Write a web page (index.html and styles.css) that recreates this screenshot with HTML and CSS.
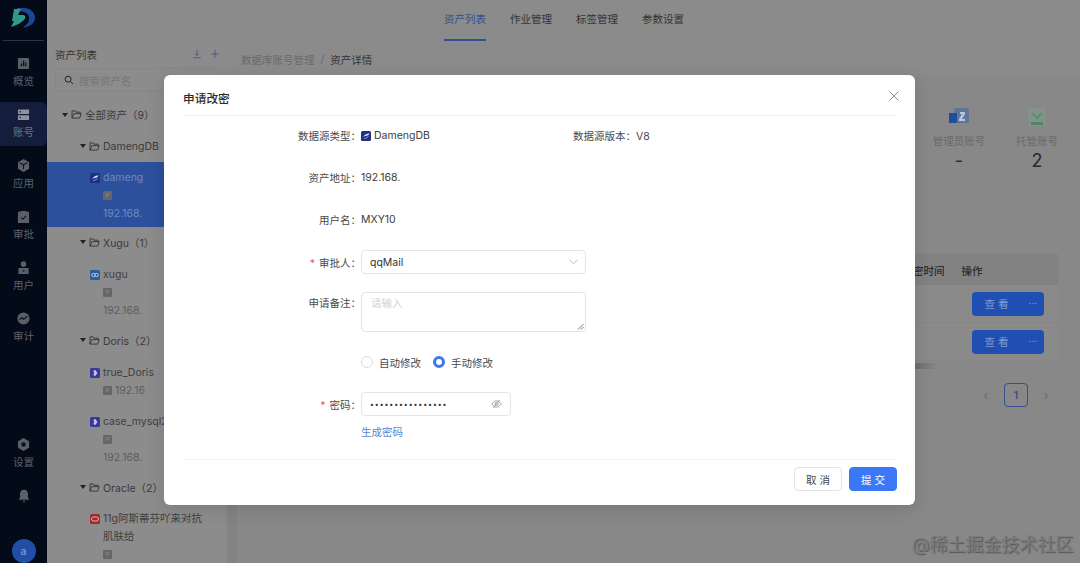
FILE: index.html
```html
<!DOCTYPE html>
<html lang="zh-CN">
<head>
<meta charset="utf-8">
<title>申请改密</title>
<link rel="stylesheet" href="styles.css">
</head>
<body>
<svg class="defs" aria-hidden="true">
  <symbol id="db-dameng" viewBox="0 0 10 10"><rect width="10" height="10" rx="1.500" fill="#1d2f86"/><path d="M2 6.500C3 3.500 5.500 2.500 8.500 2.200 8 3.800 7 4.600 5.500 4.800 4 5 3 5.600 2 6.500z" fill="#dfe6f5"/><path d="M8 4.500C7 7 5 8 2 7.800c2-.4 4-1.600 6-3.300z" fill="#9fb2dd"/></symbol>
  <symbol id="db-xugu" viewBox="0 0 10 10"><rect width="10" height="10" rx="1.500" fill="#2c5c9a"/><circle cx="3.400" cy="5" r="1.700" fill="none" stroke="#b9c9de"/><circle cx="6.600" cy="5" r="1.700" fill="none" stroke="#b9c9de"/></symbol>
  <symbol id="db-doris" viewBox="0 0 10 10"><rect width="10" height="10" rx="1.500" fill="#3a389a"/><path d="M5 1.800L7.500 5 5 8.200 3.300 6.800 4.400 5 3.300 3.200z" fill="#c5c6e4"/></symbol>
  <symbol id="db-oracle" viewBox="0 0 10 10"><rect width="10" height="10" rx="1.500" fill="#a52a2e"/><rect x="1.500" y="3" width="7" height="4" rx="2" fill="none" stroke="#e2b4b4"/></symbol>
  <symbol id="folder" viewBox="0 0 12 10"><path d="M1 9V1h3.500l1 1.400H10v1.400M1 9h8.500l1.700-5H3z" stroke="#333" fill="none"/></symbol>
</svg>

<div class="page">
  <aside class="sidebar">
    <div class="logo">
      <svg width="24" height="20" viewBox="0 0 24 20"><path d="M6 0h7c6 0 11 4 11 10 0 5-5 9-12 9.500 4-3 7-6.500 6-10.500-1-4-5-6-12-6z" fill="#1d4796"/><path d="M3 1h7L7 7h5c3 0 3 3 1 5-3 3-7 5-13 7l3-6H1z" fill="#2f9a88"/></svg>
    </div>
    <nav class="nav">
      <a class="nav-item"><svg class="nav-icon" viewBox="0 0 14 14"><rect x="1" y="1" width="12" height="12" rx="1.500" fill="#5a5f68"/><path d="M4 10V7h1.400v3zM6.400 10V4h1.400v6zM8.800 10V6h1.400v4z" fill="#0b1220"/></svg><span>概览</span></a>
      <a class="nav-item active"><svg class="nav-icon" viewBox="0 0 14 14"><path d="M1 1.500h12v5H1zM1 7.800h12v5H1z" fill="#8e929b"/><circle cx="3.500" cy="4" r=".8" fill="#0e1730"/><circle cx="3.500" cy="10.300" r=".8" fill="#0e1730"/></svg><span>账号</span></a>
      <a class="nav-item"><svg class="nav-icon" viewBox="0 0 14 14"><path d="M7 0l6 3.400v7.200L7 14l-6-3.400V3.400z" fill="#5a5f68"/><path d="M3 4l4 2.400L11 4M7 6.400V11" stroke="#0b1220" stroke-width="1.100" fill="none"/></svg><span>应用</span></a>
      <a class="nav-item"><svg class="nav-icon" viewBox="0 0 14 14"><path d="M4 2V1h6v1h3v12H1V2z" fill="#5a5f68"/><path d="M4.400 8l2 2 3.400-3.600" stroke="#0b1220" stroke-width="1.200" fill="none"/></svg><span>审批</span></a>
      <a class="nav-item"><svg class="nav-icon" viewBox="0 0 14 14"><circle cx="7" cy="3.400" r="3" fill="#5a5f68"/><path d="M1.500 7.500h11V14h-11z" fill="#5a5f68"/><path d="M6 10h2v1.400H6z" fill="#0b1220"/></svg><span>用户</span></a>
      <a class="nav-item"><svg class="nav-icon" viewBox="0 0 14 14"><circle cx="7" cy="7" r="6.500" fill="#5a5f68"/><path d="M2.600 8.400l2.600-2.400 2 1.800 4-3.200" stroke="#0b1220" stroke-width="1.200" fill="none"/></svg><span>审计</span></a>
    </nav>
    <div class="nav-bottom">
      <a class="nav-item"><svg class="nav-icon" viewBox="0 0 14 14"><path d="M7 0l6 3.500v7L7 14l-6-3.500v-7z" fill="#5a5f68"/><circle cx="7" cy="7" r="2.400" fill="#0b1220"/></svg><span>设置</span></a>
      <svg class="bell" viewBox="0 0 14 14"><path d="M7 .8c2.600 0 4 2 4 4.400v3.600l1.400 2H1.600l1.400-2V5.200c0-2.400 1.400-4.400 4-4.400z" fill="#5a5f68"/><path d="M5.500 11.800h3L7 13.600z" fill="#5a5f68"/></svg>
      <div class="avatar">a</div>
    </div>
  </aside>

  <section class="tree-panel">
    <header class="tree-head">
      <span>资产列表</span>
      <span class="tree-tools">
        <svg viewBox="0 0 12 12" class="tool"><path d="M6 1v6.500M3.800 5.500L6 7.800l2.200-2.300M1.500 10.500h9" stroke="#3c5480" fill="none"/></svg>
        <svg viewBox="0 0 12 12" class="tool"><path d="M6 1.500v9M1.500 6h9" stroke="#3c5480" fill="none"/></svg>
      </span>
    </header>
    <div class="search">
      <svg viewBox="0 0 12 12" class="search-icon"><circle cx="5" cy="5" r="3.600" stroke="#222" stroke-width="1.200" fill="none"/><path d="M7.800 7.800l3 3" stroke="#222" stroke-width="1.200"/></svg>
      <span class="search-text">搜索资产名</span>
    </div>
    <div class="tree">
      <div class="group root"><i class="caret"></i><svg class="folder"><use href="#folder"/></svg>全部资产（9）</div>

      <div class="group"><i class="caret"></i><svg class="folder"><use href="#folder"/></svg>DamengDB</div>
      <div class="asset selected">
        <div class="asset-name"><svg class="db"><use href="#db-dameng"/></svg>dameng</div>
        <div class="asset-line"><i class="ip">IP</i></div>
        <div class="asset-line">192.168.</div>
      </div>

      <div class="group"><i class="caret"></i><svg class="folder"><use href="#folder"/></svg>Xugu（1）</div>
      <div class="asset">
        <div class="asset-name"><svg class="db"><use href="#db-xugu"/></svg>xugu</div>
        <div class="asset-line"><i class="ip">IP</i></div>
        <div class="asset-line">192.168.</div>
      </div>

      <div class="group"><i class="caret"></i><svg class="folder"><use href="#folder"/></svg>Doris（2）</div>
      <div class="asset single">
        <div class="asset-name"><svg class="db"><use href="#db-doris"/></svg>true_Doris</div>
        <div class="asset-line"><i class="ip">IP</i>192.16</div>
      </div>
      <div class="asset">
        <div class="asset-name"><svg class="db"><use href="#db-doris"/></svg>case_mysql2</div>
        <div class="asset-line"><i class="ip">IP</i></div>
        <div class="asset-line">192.168.</div>
      </div>

      <div class="group"><i class="caret"></i><svg class="folder"><use href="#folder"/></svg>Oracle（2）</div>
      <div class="asset last">
        <div class="asset-name wrap"><svg class="db"><use href="#db-oracle"/></svg>11g阿斯蒂芬吖来对抗肌肤给</div>
        <div class="asset-line"><i class="ip">IP</i></div>
      </div>
    </div>
  </section>

  <main class="main">
    <div class="tabs">
      <a class="tab current">资产列表</a>
      <a class="tab">作业管理</a>
      <a class="tab">标签管理</a>
      <a class="tab">参数设置</a>
    </div>
    <div class="crumbs"><span class="crumb-root">数据库账号管理</span><span class="crumb-sep">/</span><span>资产详情</span></div>
    <div class="content">
      <div class="stats">
        <div class="stat">
          <svg class="stat-icon" viewBox="0 0 20 20"><rect x="5" y="1" width="15" height="15" rx="2" fill="#5f7699"/><rect x="0" y="6" width="8" height="10" fill="#1f4f98"/><path d="M11 5h5v2l-3 5h3v2h-6v-2l3-5h-2z" fill="#b8c6da"/></svg>
          <div class="stat-label">管理员账号</div>
          <div class="stat-value">-</div>
        </div>
        <div class="stat">
          <svg class="stat-icon" viewBox="0 0 20 20"><rect x="1" y="1" width="18" height="18" rx="2" fill="#83938a"/><path d="M4 15h12v3H4z" fill="#4a8a68"/><path d="M5.500 6l4.500 5 4.500-5" stroke="#5a9276" stroke-width="2.500" fill="none"/></svg>
          <div class="stat-label">托管账号</div>
          <div class="stat-value">2</div>
        </div>
      </div>
      <div class="table">
        <div class="table-head"><span class="th-time">密时间</span><span class="th-op">操作</span></div>
        <div class="table-row"><div class="split"><span class="split-main">查 看</span><span class="split-more">···</span></div></div>
        <div class="table-row"><div class="split"><span class="split-main">查 看</span><span class="split-more">···</span></div></div>
        <div class="scrollbar"></div>
      </div>
      <div class="pager"><span class="pager-arrow">‹</span><span class="pager-num">1</span><span class="pager-arrow">›</span></div>
    </div>
  </main>
</div>

<div class="modal">
  <header class="modal-head">
    <h2>申请改密</h2>
    <svg class="close" viewBox="0 0 10 10"><path d="M.5.500l9 9M9.500.500l-9 9" stroke="#8c8c8c" fill="none"/></svg>
  </header>
  <div class="modal-body">
    <div class="row">
      <label class="label">数据源类型：</label>
      <span class="value type"><svg class="db"><use href="#db-dameng"/></svg>DamengDB</span>
      <span class="version">数据源版本：V8</span>
    </div>
    <div class="row"><label class="label">资产地址：</label><span class="value">192.168.</span></div>
    <div class="row"><label class="label">用户名：</label><span class="value">MXY10</span></div>
    <div class="row row-select">
      <label class="label"><b class="req">*</b>审批人：</label>
      <div class="select">qqMail<svg class="chevron" viewBox="0 0 10 6"><path d="M.5.500L5 5 9.500.500" stroke="#b5b5b5" fill="none"/></svg></div>
    </div>
    <div class="row row-area">
      <label class="label">申请备注：</label>
      <div class="textarea">请输入<svg class="grip" viewBox="0 0 7 7"><path d="M6.500 1L1 6.500M6.500 4L4 6.500" stroke="#777" fill="none"/></svg></div>
    </div>
    <div class="row">
      <span class="label"></span>
      <div class="radios">
        <span class="radio-item"><i class="radio"></i>自动修改</span>
        <span class="radio-item"><i class="radio on"></i>手动修改</span>
      </div>
    </div>
    <div class="row">
      <label class="label"><b class="req">*</b>密码：</label>
      <div class="password"><span class="dots">••••••••••••••••</span><svg class="eye" viewBox="0 0 12 10"><path d="M1 5c1.500-2.400 3-3.500 5-3.500S9.500 2.600 11 5C9.500 7.400 8 8.500 6 8.500S2.500 7.400 1 5z" stroke="#999" fill="none"/><circle cx="6" cy="5" r="1.700" stroke="#999" fill="none"/><path d="M9.500.500L2.500 9.500" stroke="#999"/></svg></div>
    </div>
    <a class="gen">生成密码</a>
  </div>
  <footer class="modal-foot">
    <button class="btn">取 消</button>
    <button class="btn primary">提 交</button>
  </footer>
</div>

<div class="watermark">@稀土掘金技术社区</div>
</body>
</html>
```

FILE: styles.css
```css
* { box-sizing: border-box; }
html, body { margin: 0; padding: 0; height: 100%; overflow: hidden; }
body {
  font-family: Inter, "Noto Sans CJK SC", sans-serif;
  font-size: 10.5px;
  color: #333;
  background: #8b8b8b;
}
i { font-style: normal; }
svg { display: block; flex: none; }
.defs { position: absolute; width: 0; height: 0; }

.page { display: flex; width: 1080px; height: 563px; overflow: hidden; }

/* sidebar */
.sidebar {
  width: 47px;
  flex: none;
  background: #030b19;
  display: flex;
  flex-direction: column;
  align-items: stretch;
  color: #5d626c;
}
.logo { height: 41px; margin: 0 3px; padding: 8px 0 0 8px; border-bottom: 1px solid #2c3542; }
.nav { padding-top: 6px; display: flex; flex-direction: column; }
.nav-item {
  height: 51px;
  display: flex;
  flex-direction: column;
  align-items: center;
  justify-content: center;
  gap: 5px;
  line-height: 13px;
}
.nav-item.active { background: #141d3b; color: #6f7482; height: 44px; margin: 3.500px 0; border-radius: 0 6px 6px 0; }
.nav-icon { width: 13px; height: 13px; }
.nav-bottom { margin-top: auto; display: flex; flex-direction: column; align-items: center; }
.bell { width: 14px; height: 14px; margin-top: 10px; }
.avatar {
  width: 24px; height: 24px; border-radius: 50%;
  background: #234ea6; color: #8ea5d3;
  display: flex; align-items: center; justify-content: center;
  margin-top: 36px;
}

/* tree */
.tree-panel { width: 180px; flex: none; background: #8c8c8c; padding-top: 45px; overflow: hidden; }
.tree-head { display: flex; justify-content: space-between; align-items: center; height: 18px; margin-bottom: 1px; padding: 0 7px 0 8px; color: #333; }
.tree-tools { display: flex; gap: 8px; }
.tool { width: 10px; height: 10px; }
.search { margin: 5px 7px 6.500px 8px; height: 24px; border: 1px solid #858585; border-radius: 4px; display: flex; align-items: center; gap: 5px; padding-left: 8px; color: #757575; }
.search-text { filter: blur(.7px); }
.search-icon { width: 10px; height: 10px; }
.group { height: 31px; display: flex; align-items: center; padding-left: 33px; color: #3a3a3a; }
.group.root { height: 32px; padding-left: 15px; }
.caret { width: 0; height: 0; border: 3px solid transparent; border-top: 4px solid #222; border-bottom: 0; margin-right: 3px; }
.folder { width: 11px; height: 9px; margin-right: 3px; }
.asset { padding: 8px 4px 5px 56px; color: #3f3f3f; }
.asset.single { padding-bottom: 5px; }
.asset.last { padding-top: 7px; }
.asset.selected { padding-top: 7px; padding-bottom: 4px; background: #2d509c; color: #7089c0; }
.asset.selected .asset-line { color: #6f8ac2; }
.asset-name { height: 18px; line-height: 18px; position: relative; white-space: nowrap; }
.asset-name.wrap { height: 36px; white-space: normal; width: 108px; }
.db { position: absolute; left: -13px; top: 4px; width: 10px; height: 10px; }
.asset-line { height: 18px; line-height: 18px; color: #5c5c5c; display: flex; align-items: center; gap: 3px; }
.ip { width: 9px; height: 9px; background: #666; color: #8c8c8c; font-size: 5px; line-height: 9px; text-align: center; border-radius: 1px; }

/* main */
.main { flex: 1; min-width: 0; padding-left: 10px; display: flex; flex-direction: column; }
.tabs { height: 41px; display: flex; gap: 24px; padding-left: 207px; flex: none; }
.tab { height: 41px; line-height: 40px; color: #333; }
.tab.current { color: #34508f; border-bottom: 2px solid #30508f; }
.crumbs { height: 36px; display: flex; align-items: center; gap: 6px; padding-left: 4px; color: #333; flex: none; }
.crumb-root { color: #6a6a6a; }
.crumb-sep { color: #666; }
.content { flex: 1; background: #888; box-shadow: -10px 0 0 #838383; display: flex; flex-direction: column; align-items: flex-end; padding-top: 30px; }
.stats { display: flex; padding-right: 4px; }
.stat { width: 78px; display: flex; flex-direction: column; align-items: center; color: #6a6a6a; }
.stat-icon { width: 20px; height: 20px; }
.stat-label { margin-top: 8px; height: 14px; line-height: 14px; }
.stat-value { font-size: 18px; line-height: 24px; color: #2a2a2a; }
.table { width: 300px; margin-top: 81px; margin-right: 22px; }
.table-head { height: 31px; padding-top: 1px; background: #828282; display: flex; align-items: center; font-weight: 500; color: #2d2d2d; }
.th-time { margin-left: 155px; margin-right: 17px; }
.table-row { height: 38px; display: flex; align-items: center; justify-content: flex-end; padding-right: 14px; border-bottom: 1px solid #858585; background: #8a8a8a; }
.split { width: 72px; height: 24px; background: #1f4fb2; border-radius: 4px; color: #7f9ad0; display: flex; align-items: center; }
.split-main { width: 49px; text-align: center; }
.split-more { flex: 1; text-align: center; border-left: 1px solid #24509f; }
.scrollbar { height: 6px; width: 179px; margin-top: 2px; background: linear-gradient(90deg, #6e6e6e 88%, #868686); border-radius: 3px; }
.pager { display: flex; align-items: center; margin-top: 14px; margin-right: 31px; gap: 15px; }
.pager-arrow { color: #6e6e6e; font-size: 14px; line-height: 24px; width: 6px; text-align: center; }
.pager-num { width: 24px; height: 24px; border: 1px solid #33508f; border-radius: 4px; display: flex; align-items: center; justify-content: center; font-weight: 600; color: #34508f; }

/* modal */
.modal {
  position: absolute;
  left: 164px; top: 75px;
  width: 751px; height: 430px;
  background: #fff;
  border-radius: 6px;
  box-shadow: 0 4px 18px rgba(0,0,0,.12);
  padding: 0 18px 0 19px;
  display: flex;
  flex-direction: column;
  color: #3d3d3d;
}
.modal-head { height: 41px; flex: none; display: flex; align-items: center; justify-content: space-between; border-bottom: 1px solid #f1f1f1; padding-top: 5px; position: relative; }
.modal-head h2 { margin: 0; font-size: 11.700px; font-weight: 500; color: #2b2b2b; }
.close { width: 10px; height: 10px; position: absolute; right: -2px; top: 16px; }
.modal-body { height: 343px; flex: none; padding-top: 7px; }
.row { display: flex; align-items: center; height: 24px; margin-bottom: 18px; }
.row-select { margin-top: 19px; }
.row-area { height: 40px; align-items: flex-start; }
.row-area .label { line-height: 24px; }
.label { width: 178px; text-align: right; flex: none; color: #4a4a4a; }
.req { color: #e35a5a; font-weight: 400; margin-right: 4px; }
.value { display: inline-flex; align-items: center; color: #3d3d3d; }
.type { position: relative; padding-left: 13px; }
.type .db { left: 0; top: 2.500px; }
.version { margin-left: 143px; color: #4a4a4a; }
.select { width: 225px; height: 24px; border: 1px solid #e4e4e4; border-radius: 4px; display: flex; align-items: center; justify-content: space-between; padding: 0 7px 0 8px; color: #333; }
.chevron { width: 9px; height: 6px; }
.textarea { width: 225px; height: 40px; border: 1px solid #e4e4e4; border-radius: 4px; padding: 2px 9px; color: #d2d2d2; position: relative; }
.grip { position: absolute; right: 1px; bottom: 1px; width: 7px; height: 7px; }
.radios { display: flex; gap: 12px; }
.radio-item { display: flex; align-items: center; gap: 6px; color: #4a4a4a; }
.radio { width: 12px; height: 12px; border-radius: 50%; border: 1px solid #dcdcdc; }
.radio.on { border: 3.500px solid #3a78f2; }
.password { width: 150px; height: 24px; border: 1px solid #e4e4e4; border-radius: 4px; display: flex; align-items: center; justify-content: space-between; padding: 0 8px; }
.dots { font-size: 7px; letter-spacing: .9px; color: #333; }
.eye { width: 11px; height: 10px; }
.gen { display: block; margin: -9px 0 0 178px; line-height: 16px; color: #5a85cf; }
.modal-foot { flex: 1; border-top: 1px solid #f4f4f4; display: flex; justify-content: flex-end; gap: 7px; padding-top: 7px; }
.btn { width: 48px; height: 24px; background: #fff; border: 1px solid #e2e2e2; border-radius: 4px; font: inherit; color: #444; padding: 0; }
.btn.primary { background: #3a78f8; border-color: #3a78f8; color: #fff; }

.watermark {
  position: absolute;
  left: 912px; top: 533px;
  font-size: 18px;
  line-height: 24px;
  color: #7a7a7a;
  text-shadow: 1px 1px 1px #555;
  white-space: nowrap;
}
```
